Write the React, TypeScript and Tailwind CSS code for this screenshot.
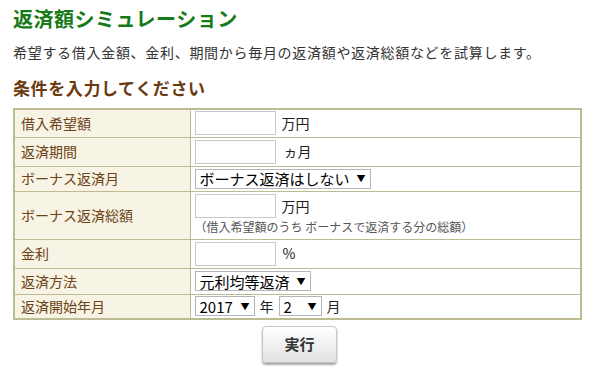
import React from "react";

const font = { fontFamily: '"Noto Sans CJK JP", "Noto Sans", sans-serif' };

function Input() {
  return <div className="inline-block w-[81px] h-[24px] border border-[#c8c8c8] bg-white align-middle" />;
}

function Select({ label, w }: { label: string; w: string }) {
  return (
    <div className={`inline-flex items-center justify-between ${w} h-[20px] border border-[#b5b5b5] bg-white px-[4px] text-[15px] leading-none text-black`}>
      <span>{label}</span>
      <span className="text-[9px] ml-[4px]">▼</span>
    </div>
  );
}

const labelCls = "border border-[#bdbb92] bg-[#f7f4e5] text-[#6d4216] text-[14px] pl-[6px] align-middle w-[176px]";
const valCls = "border border-[#bdbb92] bg-white pl-[4px] align-middle text-[14px] text-[#222]";

export default function App() {
  return (
    <div style={font} className="w-[599px] h-[373px] bg-white px-[13px] pt-[4px]">
      <h1 className="text-[20px] font-bold text-[#167a16] leading-[30px] tracking-[0.5px]">返済額シミュレーション</h1>
      <p className="text-[14px] tracking-[0.7px] text-[#333] mt-[8px] leading-[20px]">希望する借入金額、金利、期間から毎月の返済額や返済総額などを試算します。</p>
      <h2 className="text-[17px] tracking-[0.6px] font-bold text-[#6b3a10] mt-[14px] leading-[24px]">条件を入力してください</h2>
      <table className="mt-[8px] w-[569px] border-collapse border-2 border-[#bdbb92]">
        <tbody>
          <tr className="h-[28px]">
            <td className={labelCls}>借入希望額</td>
            <td className={valCls}>
              <div className="flex items-center gap-[6px]"><Input /><span>万円</span></div>
            </td>
          </tr>
          <tr className="h-[29px]">
            <td className={labelCls}>返済期間</td>
            <td className={valCls}>
              <div className="flex items-center gap-[6px]"><Input /><span className="pl-[2px]">ヵ月</span></div>
            </td>
          </tr>
          <tr className="h-[25px]">
            <td className={labelCls}>ボーナス返済月</td>
            <td className={valCls}>
              <div className="flex items-center"><Select label="ボーナス返済はしない" w="w-[176px]" /></div>
            </td>
          </tr>
          <tr className="h-[48px]">
            <td className={labelCls}>ボーナス返済総額</td>
            <td className={valCls}>
              <div className="flex items-center gap-[6px] pt-[1px]"><Input /><span>万円</span></div>
              <div className="text-[12px] text-[#555] leading-[17px] pb-[2px]">（借入希望額のうち ボーナスで返済する分の総額）</div>
            </td>
          </tr>
          <tr className="h-[29px]">
            <td className={labelCls}>金利</td>
            <td className={valCls}>
              <div className="flex items-center gap-[6px]"><Input /><span className="pl-[1px]">%</span></div>
            </td>
          </tr>
          <tr className="h-[26px]">
            <td className={labelCls}>返済方法</td>
            <td className={valCls}>
              <div className="flex items-center"><Select label="元利均等返済" w="w-[116px]" /></div>
            </td>
          </tr>
          <tr className="h-[25px]">
            <td className={labelCls}>返済開始年月</td>
            <td className={valCls}>
              <div className="flex items-center gap-[5px]">
                <Select label="2017" w="w-[60px]" />
                <span>年</span>
                <Select label="2" w="w-[43px]" />
                <span>月</span>
              </div>
            </td>
          </tr>
        </tbody>
      </table>
      <div className="flex justify-center mt-[6px]">
        <button className="w-[75px] h-[37px] rounded-[4px] border border-[#c4c4c4] bg-gradient-to-b from-[#ffffff] to-[#e2e2e2] shadow-[0_2px_2px_rgba(0,0,0,0.35)] text-[15px] font-bold text-[#333]">
          実行
        </button>
      </div>
    </div>
  );
}
